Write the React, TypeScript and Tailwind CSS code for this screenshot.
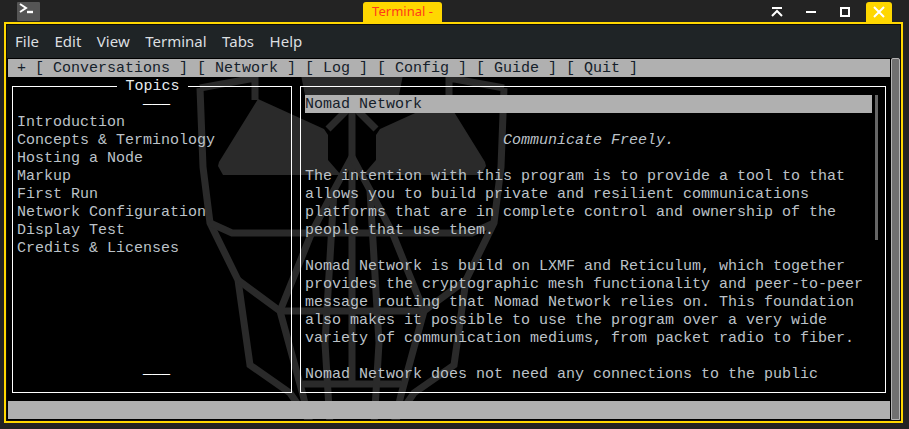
import React from "react";

const mono = { fontFamily: '"Liberation Mono", monospace' };

function Watermark() {
  const strokes = [
    "M200 88 L203 167 L210 223 L238 280 L250 365 L290 393 L312 425",
    "M200 88 L255 78 L255 100",
    "M238 280 L280 311 L303 395 L310 425",
    "M280 311 L312 232 L334 190 L352 157",
    "M334 190 L325 343 L330 425",
    "M352 100 L352 385",
    "M280 311 L424 311",
    "M210 223 L232 233 L472 233 L494 223",
    "M303 384 L401 384",
    "M328 129 L352 105",
    "M504 88 L501 167 L494 223 L466 280 L454 365 L414 393 L392 425",
    "M504 88 L449 78 L449 100",
    "M466 280 L424 311 L401 395 L394 425",
    "M424 311 L392 232 L370 190 L352 157",
    "M370 190 L379 343 L374 425",
    "M376 129 L352 105",
  ];
  return (
    <svg
      className="absolute left-0 top-0"
      width="884"
      height="362"
      viewBox="7 58 884 362"
      fill="none"
    >
      <g stroke="#2a2a2a" strokeWidth="7" strokeLinejoin="miter">
        {strokes.map((d) => (
          <path key={d} d={d} />
        ))}
      </g>
      <g fill="#2a2a2a">
        <path d="M258 99 L324 129 L328 135 L328 160 L341 175 L223 175 L218 166 L219 162 Z" />
        <path d="M446 99 L380 129 L376 135 L376 160 L363 175 L481 175 L486 166 L485 162 Z" />
        <path d="M300 70 L404 70 L398 100 L306 100 Z" />
      </g>
    </svg>
  );
}

const topics = [
  "Introduction",
  "Concepts & Terminology",
  "Hosting a Node",
  "Markup",
  "First Run",
  "Network Configuration",
  "Display Test",
  "Credits & Licenses",
];

const para1 = [
  "The intention with this program is to provide a tool to that",
  "allows you to build private and resilient communications",
  "platforms that are in complete control and ownership of the",
  "people that use them.",
];

const para2 = [
  "Nomad Network is build on LXMF and Reticulum, which together",
  "provides the cryptographic mesh functionality and peer-to-peer",
  "message routing that Nomad Network relies on. This foundation",
  "also makes it possible to use the program over a very wide",
  "variety of communication mediums, from packet radio to fiber.",
];

function Line({ children }: { children?: React.ReactNode }) {
  return <div className="h-[18px] whitespace-pre leading-[20px]">{children}</div>;
}

function Rule() {
  return (
    <div className="h-[18px] whitespace-pre leading-[22px] text-white">{"              ───"}</div>
  );
}

export default function App() {
  return (
    <div className="relative h-[429px] w-[909px] overflow-hidden bg-[#232323]">
      {/* title bar */}
      <div className="flex h-[22px] items-start pl-[17px] pr-[13px]">
        <div className="mt-[2px] flex h-[19px] w-[23px] rounded-[1px] bg-[#555555]">
          <svg width="23" height="19" viewBox="0 0 23 19" fill="none" stroke="#ffffff" strokeWidth="2">
            <path d="M3 2 L9 6 L3 10" />
            <path d="M10 10 H16" strokeWidth="2.4" />
          </svg>
        </div>
        <div
          className="ml-[323px] mt-[2px] flex h-[20px] w-[79px] items-center justify-center rounded-t-[3px] bg-[#ffd700] text-[13px] text-[#ff3a1a]"
          style={{ fontFamily: '"Noto Sans", sans-serif' }}
        >
          Terminal -
        </div>
        <div className="ml-auto flex h-[22px]">
          <div className="flex h-[22px] w-[34px] items-start justify-center pt-[7px]">
            <svg width="12" height="10" viewBox="0 0 12 10" fill="none" stroke="#ffffff" strokeWidth="2">
              <path d="M1 1 H11" />
              <path d="M1 9 L6 4 L11 9" />
            </svg>
          </div>
          <div className="flex h-[22px] w-[34px] items-start justify-center pt-[11px]">
            <div className="h-[2px] w-[10px] bg-white" />
          </div>
          <div className="flex h-[22px] w-[34px] items-start justify-center pt-[7px]">
            <div className="h-[10px] w-[10px] border-2 border-white" />
          </div>
          <div className="flex h-[22px] w-[34px] items-start justify-center pt-[2px]">
            <div className="flex h-[20px] w-[26px] items-center justify-center rounded-t-[3px] bg-[#ffd700]">
              <svg width="12" height="12" viewBox="0 0 12 12" fill="none" stroke="#ffffff" strokeWidth="2">
                <path d="M1 1 L11 11 M11 1 L1 11" />
              </svg>
            </div>
          </div>
        </div>
      </div>

      {/* window */}
      <div className="ml-[4px] flex h-[401px] w-[899px] flex-col border-2 border-[#ffd700]">
        <div className="flex h-full flex-col border border-[#0c0c0c]">
          {/* menu */}
          <div
            className="flex h-[33px] shrink-0 items-center gap-[15.5px] bg-[#1f2426] pl-[8px] text-[15px] text-[#dcdfe0]"
            style={{ fontFamily: '"Noto Sans", sans-serif' }}
          >
            <span>File</span>
            <span>Edit</span>
            <span>View</span>
            <span>Terminal</span>
            <span>Tabs</span>
            <span>Help</span>
          </div>

          <div className="flex min-h-0 flex-1">
            {/* terminal */}
            <div
              className="relative h-[362px] w-[884px] shrink-0 overflow-hidden bg-black text-[15px] text-[#bcc2c8]"
              style={mono}
            >
              <Watermark />
              <div className="relative flex h-full flex-col px-[1px] pt-[1px]">
                <div className="h-[18px] whitespace-pre bg-[#b0b0b0] pl-[9px] leading-[20px] text-[#15202a]">
                  + [ Conversations ] [ Network ] [ Log ] [ Config ] [ Guide ] [ Quit ]
                </div>
                <div className="mt-[9px] flex h-[307px] gap-[8px] pl-[4px]">
                  {/* topics */}
                  <div className="relative h-[307px] w-[280px] border border-white px-[4px] pt-[8px]">
                    <div className="absolute left-[104px] top-[-10px] h-[18px] w-[71px] whitespace-pre bg-black text-center leading-[20px] text-[#e8ecef]">
                      Topics
                    </div>
                    <Rule />
                    {topics.map((t) => (
                      <Line key={t}>{t}</Line>
                    ))}
                    <div className="h-[108px]" />
                    <Rule />
                  </div>
                  {/* guide */}
                  <div className="flex h-[307px] w-[586px] border border-white pl-[4px] pt-[8px]">
                    <div className="w-[567px] shrink-0 overflow-hidden">
                      <div className="h-[18px] whitespace-pre bg-[#b0b0b0] leading-[20px] text-[#15202a]">
                        Nomad Network
                      </div>
                      <Line />
                      <Line>
                        <span className="italic">{"                      Communicate Freely."}</span>
                      </Line>
                      <Line />
                      {para1.map((l) => (
                        <Line key={l}>{l}</Line>
                      ))}
                      <Line />
                      {para2.map((l) => (
                        <Line key={l}>{l}</Line>
                      ))}
                      <Line />
                      <Line>Nomad Network does not need any connections to the public</Line>
                    </div>
                    <div className="ml-[3px] h-[145px] w-[3px] bg-[#666666]" />
                  </div>
                </div>
                <div className="mt-[8px] h-[18px] bg-[#b0b0b0]" />
              </div>
            </div>
            {/* outer scrollbar */}
            <div className="h-[362px] w-[9px] shrink-0 rounded-t-[2px] border border-[#b4b4b4] bg-[#707070]" />
          </div>
        </div>
      </div>
    </div>
  );
}
